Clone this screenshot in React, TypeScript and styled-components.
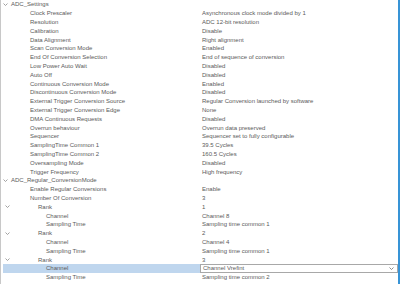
import React from "react";
import styled, { createGlobalStyle } from "styled-components";

const GlobalStyle = createGlobalStyle`
	html, body {
		margin: 0;
		padding: 0;
		background: #ffffff;
	}
	body {
		font-family: "Liberation Sans", Arial, sans-serif;
	}
`;

interface TreeRow {
	label: string;
	value?: string;
	depth: number;
	expandable?: boolean;
	selected?: boolean;
}

const rows: TreeRow[] = [
	{ label: "ADC_Settings", depth: 0, expandable: true },
	{ label: "Clock Prescaler", value: "Asynchronous clock mode divided by 1", depth: 1 },
	{ label: "Resolution", value: "ADC 12-bit resolution", depth: 1 },
	{ label: "Calibration", value: "Disable", depth: 1 },
	{ label: "Data Alignment", value: "Right alignment", depth: 1 },
	{ label: "Scan Conversion Mode", value: "Enabled", depth: 1 },
	{ label: "End Of Conversion Selection", value: "End of sequence of conversion", depth: 1 },
	{ label: "Low Power Auto Wait", value: "Disabled", depth: 1 },
	{ label: "Auto Off", value: "Disabled", depth: 1 },
	{ label: "Continuous Conversion Mode", value: "Enabled", depth: 1 },
	{ label: "Discontinuous Conversion Mode", value: "Disabled", depth: 1 },
	{ label: "External Trigger Conversion Source", value: "Regular Conversion launched by software", depth: 1 },
	{ label: "External Trigger Conversion Edge", value: "None", depth: 1 },
	{ label: "DMA Continuous Requests", value: "Disabled", depth: 1 },
	{ label: "Overrun behaviour", value: "Overrun data preserved", depth: 1 },
	{ label: "Sequencer", value: "Sequencer set to fully configurable", depth: 1 },
	{ label: "SamplingTime Common 1", value: "39.5 Cycles", depth: 1 },
	{ label: "SamplingTime Common 2", value: "160.5 Cycles", depth: 1 },
	{ label: "Oversampling Mode", value: "Disabled", depth: 1 },
	{ label: "Trigger Frequency", value: "High frequency", depth: 1 },
	{ label: "ADC_Regular_ConversionMode", depth: 0, expandable: true },
	{ label: "Enable Regular Conversions", value: "Enable", depth: 1 },
	{ label: "Number Of Conversion", value: "3", depth: 1 },
	{ label: "Rank", value: "1", depth: 2, expandable: true },
	{ label: "Channel", value: "Channel 8", depth: 3 },
	{ label: "Sampling Time", value: "Sampling time common 1", depth: 3 },
	{ label: "Rank", value: "2", depth: 2, expandable: true },
	{ label: "Channel", value: "Channel 4", depth: 3 },
	{ label: "Sampling Time", value: "Sampling time common 1", depth: 3 },
	{ label: "Rank", value: "3", depth: 2, expandable: true },
	{ label: "Channel", value: "Channel Vrefint", depth: 3, selected: true },
	{ label: "Sampling Time", value: "Sampling time common 2", depth: 3 },
];

// text start (px) for each depth level
const indents = [11, 30, 38, 46];
const chevronLeft = [2, 2, 4, 4];

const Panel = styled.div`
	width: 400px;
	height: 284px;
	overflow: hidden;
	box-sizing: border-box;
	border-left: 1px solid #c8c8c8;
	border-right: 2px solid #3894d6;
	display: flex;
	flex-direction: column;
	font-size: 6px;
	color: #5a5a5a;
`;

const Row = styled.div`
	height: 8.8px;
	flex-shrink: 0;
	display: grid;
	grid-template-columns: 199px 1fr;
	align-items: center;
`;

const NameCell = styled.div<{ indent: number; selected?: boolean }>`
	position: relative;
	height: 100%;
	display: flex;
	align-items: center;
	margin-left: ${(p) => (p.selected ? 2 : 0)}px;
	padding-left: ${(p) => (p.selected ? p.indent - 3 : p.indent - 1)}px;
	background: ${(p) => (p.selected ? "#bfd6ee" : "transparent")};
	white-space: nowrap;
`;

const Chevron = styled.svg<{ left: number }>`
	position: absolute;
	left: ${(p) => p.left}px;
	top: 3px;
`;

const ValueCell = styled.div`
	height: 100%;
	display: flex;
	align-items: center;
	padding-left: 2px;
	white-space: nowrap;
`;

const ComboBox = styled.div`
	height: 100%;
	box-sizing: border-box;
	border: 1px solid #a8a8a8;
	background: #ffffff;
	display: flex;
	align-items: center;
	justify-content: space-between;
	padding: 0 3px 0 2px;
	white-space: nowrap;
`;

const Arrow = ({ left }: { left: number }) => (
	<Chevron left={left} width="5" height="3" viewBox="0 0 5 3">
		<polyline
			points="0.5,0.5 2.5,2.5 4.5,0.5"
			fill="none"
			stroke="#8a8a8a"
			strokeWidth="0.8"
		/>
	</Chevron>
);

export default function App() {
	return (
		<>
			<GlobalStyle />
			<Panel>
				{rows.map((r, i) => (
					<Row key={i}>
						<NameCell indent={indents[r.depth]} selected={r.selected}>
							{r.expandable && (
								<Arrow left={chevronLeft[r.depth] - (r.selected ? 2 : 0)} />
							)}
							{r.label}
						</NameCell>
						{r.selected ? (
							<ComboBox>
								<span>{r.value}</span>
								<svg width="5" height="3" viewBox="0 0 5 3">
									<polyline
										points="0.5,0.5 2.5,2.5 4.5,0.5"
										fill="none"
										stroke="#707070"
										strokeWidth="0.8"
									/>
								</svg>
							</ComboBox>
						) : (
							<ValueCell>{r.value}</ValueCell>
						)}
					</Row>
				))}
			</Panel>
		</>
	);
}
